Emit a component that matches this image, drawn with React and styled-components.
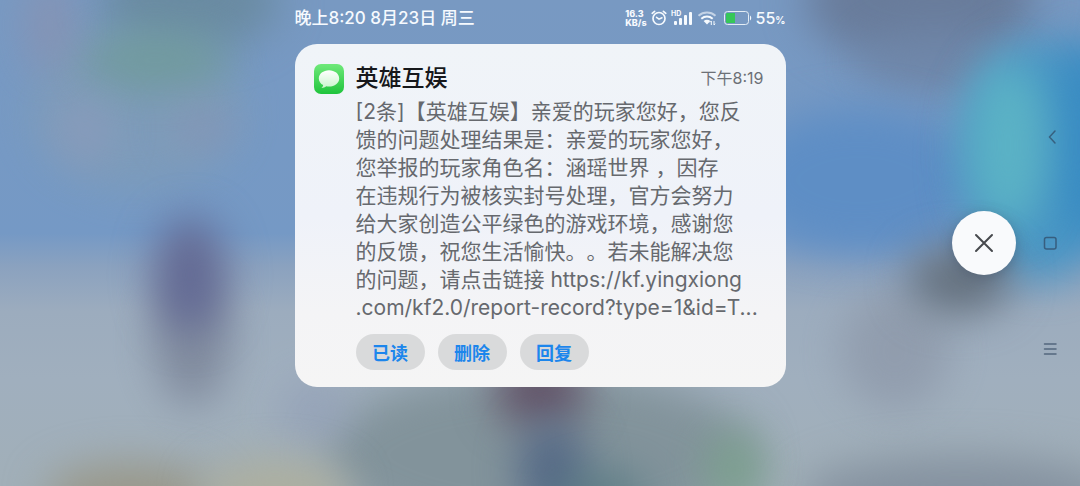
import React from 'react';
import styled, { createGlobalStyle } from 'styled-components';

const GlobalStyle = createGlobalStyle`
    * {
        box-sizing: border-box;
    }

    body {
        margin: 0;
        font-family: Inter, 'Noto Sans CJK SC', sans-serif;
    }

    button {
        padding: 0;
        border: none;
        font-family: inherit;
        cursor: pointer;
    }
`;

const Screen = styled.div`
    position: relative;
    display: grid;
    grid-template-columns: 1fr minmax(0, 491px) 1fr;
    min-height: 100vh;
    overflow: hidden;
    background: #a0aeb9;
`;

const Backdrop = styled.svg`
    position: absolute;
    inset: 0;
    width: 100%;
    height: 100%;
`;

const Center = styled.div`
    position: relative;
    grid-column: 2;
    display: flex;
    flex-direction: column;
    gap: 8px;
`;

const StatusBar = styled.header`
    display: flex;
    align-items: center;
    justify-content: space-between;
    height: 36px;
    color: #f6fafe;
    font-size: 16px;
    font-weight: 500;
`;

const DateText = styled.span`
    font-size: 17px;
    line-height: 24px;
`;

const StatusIcons = styled.div`
    display: flex;
    align-items: center;
    gap: 4px;
`;

const NetSpeed = styled.div`
    font-size: 9px;
    font-weight: 800;
    line-height: 9px;
`;

const Battery = styled.div`
    display: flex;
    align-items: center;
    gap: 4px;
    margin-left: 3px;
`;

const Percent = styled.small`
    font-size: 10px;
    font-weight: 700;
`;

const Card = styled.article`
    display: grid;
    grid-template-columns: 30px 1fr;
    column-gap: 12px;
    padding: 20px 22px 17px 19px;
    border-radius: 22px;
    background: linear-gradient(#f0f4f8, #eff2f9 50%, #f4f4f6 78%, #f5f5f5);
`;

const CardHeader = styled.div`
    display: flex;
    align-items: center;
    justify-content: space-between;
    height: 28px;
`;

const Title = styled.h1`
    margin: 0;
    color: #16181b;
    font-size: 23px;
    font-weight: 500;
    line-height: 26px;
`;

const Time = styled.time`
    color: #6c7076;
    font-size: 16px;
    line-height: 24px;
`;

const CardBody = styled.div`
    grid-column: 2;
    padding-top: 4px;
`;

const Message = styled.p`
    margin: 0;
    color: #66696e;
    font-size: 21px;
    font-weight: 400;
    line-height: 28px;
    text-spacing-trim: space-all;
    white-space: pre;
`;

const Actions = styled.div`
    display: flex;
    gap: 13px;
    margin-top: 12px;
`;

const ActionButton = styled.button`
    width: 69px;
    height: 36px;
    border-radius: 18px;
    background: #d9dadb;
    color: #1c86ec;
    font-size: 18px;
    font-weight: 600;
`;

const Side = styled.div`
    position: relative;
    display: flex;
    align-items: center;
    justify-content: flex-end;
    gap: 4px;
`;

const CloseButton = styled.button`
    display: flex;
    align-items: center;
    justify-content: center;
    width: 64px;
    height: 64px;
    border-radius: 50%;
    background: #f9fafc;
    box-shadow: 0 3px 14px rgba(50, 60, 80, 0.35);
`;

const NavRail = styled.nav`
    display: flex;
    flex-direction: column;
    align-items: center;
    gap: 82px;
    width: 60px;
`;

const NavButton = styled.button`
    display: flex;
    width: 24px;
    height: 24px;
    background: none;
    color: rgba(45, 65, 90, 0.65);
`;

// cx, cy, rx, ry, colour, opacity
const blobs = [
    [135, 110, 105, 80, '#7f9db8', 0.8],
    [190, 0, 90, 50, '#6a8ba2', 1],
    [155, 60, 75, 32, '#719b9d', 0.9],
    [50, 25, 24, 50, '#8a92b0', 0.8],
    [85, 130, 30, 34, '#8f9abb', 0.6],
    [200, 127, 34, 22, '#8893b3', 0.6],
    [920, 0, 115, 65, '#697c9b', 1],
    [935, 60, 75, 34, '#6f86a8', 0.8],
    [860, 180, 120, 72, '#5e8ec5', 1],
    [1040, 160, 80, 120, '#4a97c5', 1],
    [1090, 140, 45, 100, '#3a8cc3', 1],
    [1008, 145, 40, 84, '#5bb2c5', 1],
    [895, 350, 55, 60, '#8e99aa', 0.8],
    [960, 280, 52, 34, '#65717e', 1],
    [960, 496, 160, 40, '#8592a0', 1],
    [540, 455, 215, 85, '#82939b', 1],
    [315, 410, 36, 32, '#929fb8', 0.7],
    [540, 390, 46, 38, '#64566a', 1],
    [552, 470, 34, 50, '#566a87', 1],
    [600, 496, 50, 26, '#52777f', 0.7],
    [735, 470, 30, 40, '#7ba08d', 0.9],
    [130, 495, 85, 32, '#99988a', 1],
    [275, 492, 75, 32, '#adaf9f', 1],
    [192, 340, 38, 66, '#7e889b', 0.9],
    [190, 275, 36, 58, '#636a94', 1],
];

const Wallpaper = () => (
    <Backdrop viewBox="0 0 1080 486" preserveAspectRatio="none" aria-hidden="true">
        <defs>
            <linearGradient id="sky" x1="0" y1="0" x2="0" y2="1">
                <stop offset="0" stopColor="#7899c2" />
                <stop offset="0.48" stopColor="#7599c5" />
                <stop offset="0.55" stopColor="#8ba2bf" />
                <stop offset="0.64" stopColor="#9cacbe" />
                <stop offset="0.78" stopColor="#a0afbe" />
                <stop offset="1" stopColor="#a1afb8" />
            </linearGradient>
            <filter id="soft" x="-150%" y="-150%" width="400%" height="400%" colorInterpolationFilters="sRGB">
                <feGaussianBlur stdDeviation="20" />
            </filter>
        </defs>
        <rect width="1080" height="486" fill="url(#sky)" />
        {blobs.map(([cx, cy, rx, ry, fill, opacity]) => (
            <ellipse key={`${cx}-${cy}`} cx={cx} cy={cy} rx={rx} ry={ry} fill={fill} opacity={opacity} filter="url(#soft)" />
        ))}
    </Backdrop>
);

const MessagesIcon = () => (
    <svg width="30" height="30" viewBox="0 0 30 30" aria-hidden="true">
        <defs>
            <linearGradient id="appGreen" x1="0" y1="0" x2="0" y2="1">
                <stop offset="0" stopColor="#6fe97a" />
                <stop offset="1" stopColor="#1fc43c" />
            </linearGradient>
            <linearGradient id="bubble" x1="0" y1="0" x2="0" y2="1">
                <stop offset="0" stopColor="#ffffff" />
                <stop offset="1" stopColor="#c9f5cd" />
            </linearGradient>
        </defs>
        <rect width="30" height="30" rx="7" fill="url(#appGreen)" />
        <path
            d="M15 6.300c-5.700 0-10.200 3.600-10.200 8.100 0 2.800 1.700 5.200 4.300 6.700-.1 1.300-.8 2.200-1.600 2.900 1.900-.1 3.500-.8 4.700-1.800.9.2 1.800.3 2.800.3 5.700 0 10.200-3.600 10.200-8.100S20.700 6.300 15 6.300z"
            fill="url(#bubble)"
        />
    </svg>
);

const AlarmIcon = () => (
    <svg width="16" height="16" viewBox="0 0 16 16" fill="none" stroke="currentColor" strokeLinecap="round" aria-hidden="true">
        <circle cx="8" cy="8.500" r="6" strokeWidth="1.700" />
        <path d="M5.500 7.300 8 9.200l3-1.400" strokeWidth="1.500" />
        <path d="M1.200 3.300 3.600 1.300M14.800 3.300l-2.400-2" strokeWidth="1.700" />
    </svg>
);

const SignalIcon = () => (
    <svg width="22" height="16" viewBox="0 0 22 16" fill="currentColor" aria-hidden="true">
        <text x="0" y="6" fontSize="7" fontWeight="700">HD</text>
        <rect x="3" y="11" width="3" height="4" rx="1" />
        <rect x="8" y="8" width="3" height="7" rx="1" />
        <rect x="13" y="5" width="3" height="10" rx="1" />
        <rect x="18" y="2" width="3" height="13" rx="1" />
    </svg>
);

const WifiIcon = () => (
    <svg width="20" height="16" viewBox="0 0 20 16" fill="none" stroke="currentColor" aria-hidden="true">
        <path d="M1.500 5.800c5-4.300 12-4.300 17 0" strokeWidth="2" opacity="0.6" />
        <path d="M4.300 8.700c3.400-2.800 8-2.800 11.400 0" strokeWidth="2" />
        <path d="M6.600 11c2-1.700 4.800-1.700 6.800 0L10 14.500z" fill="currentColor" stroke="none" />
        <path d="M14.300 11v4M13 12.300l1.300-1.300M17 11v4M18.200 13.700 17 15" strokeWidth="1" />
    </svg>
);

const BatteryIcon = () => (
    <svg width="28" height="14" viewBox="0 0 28 14" aria-hidden="true">
        <rect x="0.500" y="0.500" width="24" height="13" rx="3" fill="none" stroke="#e4edf5" />
        <path d="M3 2h8v10H3a1 1 0 0 1-1-1V3a1 1 0 0 1 1-1z" fill="#36c759" />
        <path d="M26 4.500c1.600.7 1.600 4.300 0 5z" fill="#f6fafe" />
    </svg>
);

const CloseIcon = () => (
    <svg width="20" height="20" viewBox="0 0 20 20" stroke="#47494d" strokeWidth="2" strokeLinecap="round" aria-hidden="true">
        <path d="M2 2l16 16M18 2 2 18" />
    </svg>
);

const NavIcon = ({ children }) => (
    <svg width="24" height="24" viewBox="0 0 24 24" fill="none" stroke="currentColor" strokeWidth="1.500" strokeLinecap="round" aria-hidden="true">
        {children}
    </svg>
);

const message = `[2条]【英雄互娱】亲爱的玩家您好，您反
馈的问题处理结果是：亲爱的玩家您好，
您举报的玩家角色名：涵瑶世界 ，因存
在违规行为被核实封号处理，官方会努力
给大家创造公平绿色的游戏环境，感谢您
的反馈，祝您生活愉快。。若未能解决您
的问题，请点击链接 https://kf.yingxiong
.com/kf2.0/report-record?type=1&id=T...`;

const actions = ['已读', '删除', '回复'];

const App = () => {
    return (
        <Screen lang="zh-CN">
            <GlobalStyle />
            <Wallpaper />
            <Center>
                <StatusBar>
                    <DateText>晚上8:20 8月23日 周三</DateText>
                    <StatusIcons>
                        <NetSpeed>
                            <div>16.3</div>
                            <div>KB/s</div>
                        </NetSpeed>
                        <AlarmIcon />
                        <SignalIcon />
                        <WifiIcon />
                        <Battery>
                            <BatteryIcon />
                            <span>55<Percent>%</Percent></span>
                        </Battery>
                    </StatusIcons>
                </StatusBar>
                <Card>
                    <MessagesIcon />
                    <CardHeader>
                        <Title>英雄互娱</Title>
                        <Time>下午8:19</Time>
                    </CardHeader>
                    <CardBody>
                        <Message>{message}</Message>
                        <Actions>
                            {actions.map((item) => (
                                <ActionButton key={item} type="button">{item}</ActionButton>
                            ))}
                        </Actions>
                    </CardBody>
                </Card>
            </Center>
            <Side>
                <CloseButton type="button" aria-label="关闭">
                    <CloseIcon />
                </CloseButton>
                <NavRail>
                    <NavButton type="button" aria-label="返回">
                        <NavIcon><path d="M17 6 11.500 12l5.500 6" /></NavIcon>
                    </NavButton>
                    <NavButton type="button" aria-label="主屏幕">
                        <NavIcon><rect x="6.500" y="6.500" width="11.500" height="11.500" rx="2" /></NavIcon>
                    </NavButton>
                    <NavButton type="button" aria-label="最近任务">
                        <NavIcon><path d="M6.500 7h11.500M6.500 12h11.500M6.500 17h11.500" /></NavIcon>
                    </NavButton>
                </NavRail>
            </Side>
        </Screen>
    );
};

export default App;
